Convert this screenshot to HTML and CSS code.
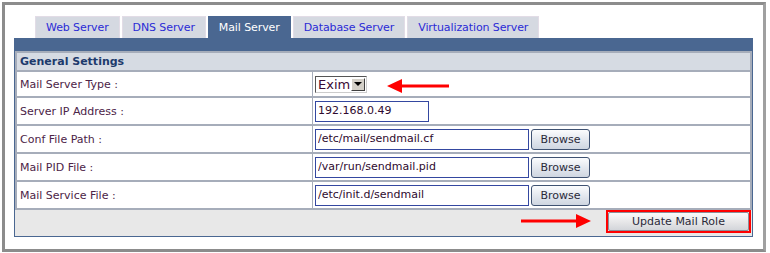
FILE: index.html
```html
<!DOCTYPE html>
<html lang="en">
<head>
  <meta name="viewport" content="width=device-width, initial-scale=1">
  <link rel="stylesheet" href="styles.css">
  <title>Mail Server</title>
</head>
<body>

<div class="frame">
  <!-- Tabs -->
  <div class="tabs">
    <a class="tab" href="#">Web Server</a>
    <a class="tab" href="#">DNS Server</a>
    <a class="tab active" href="#">Mail Server</a>
    <a class="tab" href="#">Database Server</a>
    <a class="tab" href="#">Virtualization Server</a>
  </div>

  <div class="panel">
    <table class="settings">
      <tr class="head">
        <th colspan="2">General Settings</th>
      </tr>
      <tr class="first">
        <td class="label">Mail Server Type :</td>
        <td class="value">
          <div class="select">
            <span class="select-text">Exim</span>
            <span class="select-btn"><span class="caret"></span></span>
          </div>
        </td>
      </tr>
      <tr>
        <td class="label">Server IP Address :</td>
        <td class="value"><input class="field short" type="text" value="192.168.0.49"></td>
      </tr>
      <tr>
        <td class="label">Conf File Path :</td>
        <td class="value"><input class="field" type="text" value="/etc/mail/sendmail.cf"><button class="browse">Browse</button></td>
      </tr>
      <tr>
        <td class="label">Mail PID File :</td>
        <td class="value"><input class="field" type="text" value="/var/run/sendmail.pid"><button class="browse">Browse</button></td>
      </tr>
      <tr>
        <td class="label">Mail Service File :</td>
        <td class="value"><input class="field" type="text" value="/etc/init.d/sendmail"><button class="browse">Browse</button></td>
      </tr>
    </table>

    <div class="footer">
      <div class="highlight">
        <button class="update">Update Mail Role</button>
      </div>
    </div>
  </div>

  <!-- annotation arrows -->
  <svg class="arrow arrow-left" width="64" height="14" viewBox="0 0 64 14">
    <path d="M14 7 H62" stroke="#f00" stroke-width="3"/>
    <path d="M0 7 L15 0 L15 14 Z" fill="#f00"/>
  </svg>
  <svg class="arrow arrow-right" width="70" height="14" viewBox="0 0 70 14">
    <path d="M0 7 H56" stroke="#f00" stroke-width="3"/>
    <path d="M70 7 L55 0 L55 14 Z" fill="#f00"/>
  </svg>
</div>

</body>
</html>
```

FILE: styles.css
```css
body {
  margin: 0;
  padding: 0;
  background-color: #fff;
  font-family: "DejaVu Sans", Verdana, sans-serif;
  font-size: 11px;
}
.frame {
  position: relative;
  margin: 2px 0 0 2px;
  width: 764px;
  height: 250px;
  box-sizing: border-box;
  border: 3px solid #8c8c8c;
  border-right-color: #a0a0a0;
  padding: 11px 0 0 9px;
}
.tabs {
  display: flex;
  gap: 2px;
  margin-left: 21px;
  height: 22px;
}
.tab {
  display: flex;
  align-items: center;
  padding: 0 10px;
  background-color: #d5d9e1;
  border: 1px solid #e2dce6;
  border-bottom: none;
  color: #2b2bd6;
  text-decoration: none;
  font-size: 11px;
  letter-spacing: -0.1px;
}
.tab.active {
  background-color: #4a6791;
  border-color: #4a6791;
  color: #fff;
}
.panel {
  width: 739px;
  box-sizing: border-box;
  border: 1px solid #4a6791;
  border-top: 13px solid #4a6791;
  background-color: #e8e8e8;
}
.settings {
  width: 100%;
  border-collapse: collapse;
  border: 2px solid #a6adba;
  background-color: #fff;
}
.settings th {
  height: 17px;
  text-align: left;
  padding: 0 3px;
  background-color: #d6dbe3;
  color: #1d3a6c;
  font-size: 11px;
  border-bottom: 2px solid #a6adba;
}
.settings td {
  height: 26px;
  padding: 0;
  border-bottom: 2px solid #a6adba;
  vertical-align: middle;
}
.settings tr.first td {
  height: 24px;
}
.settings td.label {
  width: 292px;
  padding-left: 3px;
  color: #4c2447;
}
.settings td.value {
  border-left: 1px solid #a6adba;
  padding-left: 2px;
}
.select {
  display: flex;
  align-items: center;
  width: 52px;
  height: 17px;
  box-sizing: border-box;
  border: 1px solid #555;
  border-right-color: #ccc;
  border-bottom-color: #ccc;
  background-color: #fff;
}
.select-text {
  flex: 1;
  padding-left: 2px;
  font-size: 13px;
  color: #3a0a35;
  font-family: "DejaVu Sans", Tahoma, sans-serif;
}
.select-btn {
  width: 14px;
  height: 13px;
  margin-right: 1px;
  box-sizing: border-box;
  background-color: #d4d0c8;
  border: 1px solid #fff;
  border-right-color: #404040;
  border-bottom-color: #404040;
  display: flex;
  align-items: center;
  justify-content: center;
}
.caret {
  width: 0;
  height: 0;
  border-left: 4px solid transparent;
  border-right: 4px solid transparent;
  border-top: 4px solid #000;
}
.field {
  width: 214px;
  height: 21px;
  box-sizing: border-box;
  border: 1px solid #3447a0;
  padding: 0 2px 2px;
  margin: 0;
  font-family: "DejaVu Sans", Verdana, sans-serif;
  font-size: 11px;
  color: #2e0a2e;
  vertical-align: middle;
}
.field.short {
  width: 114px;
}
.browse {
  width: 59px;
  height: 21px;
  margin: 0 0 0 2px;
  padding: 0;
  vertical-align: middle;
  border: 1px solid #3f5272;
  border-radius: 3px;
  background: linear-gradient(#fbfcfd, #dfe4ec 60%, #cfd6e1);
  font-family: "DejaVu Sans", Verdana, sans-serif;
  font-size: 11px;
  color: #2a2a3a;
}
.footer {
  display: flex;
  justify-content: flex-end;
  height: 26px;
  padding-right: 1px;
}
.highlight {
  border: 2px solid #f00;
  height: 23px;
  box-sizing: border-box;
}
.update {
  display: block;
  width: 141px;
  height: 19px;
  margin: 0;
  padding: 0;
  border: 1px solid #8a8f99;
  border-radius: 2px;
  background: linear-gradient(#fafafa, #e4e4e6 60%, #d3d5da);
  font-family: "DejaVu Sans", Verdana, sans-serif;
  font-size: 11px;
  color: #2a2a3a;
}
.arrow {
  position: absolute;
}
.arrow-left {
  left: 382px;
  top: 74px;
}
.arrow-right {
  left: 516px;
  top: 209px;
}
```
